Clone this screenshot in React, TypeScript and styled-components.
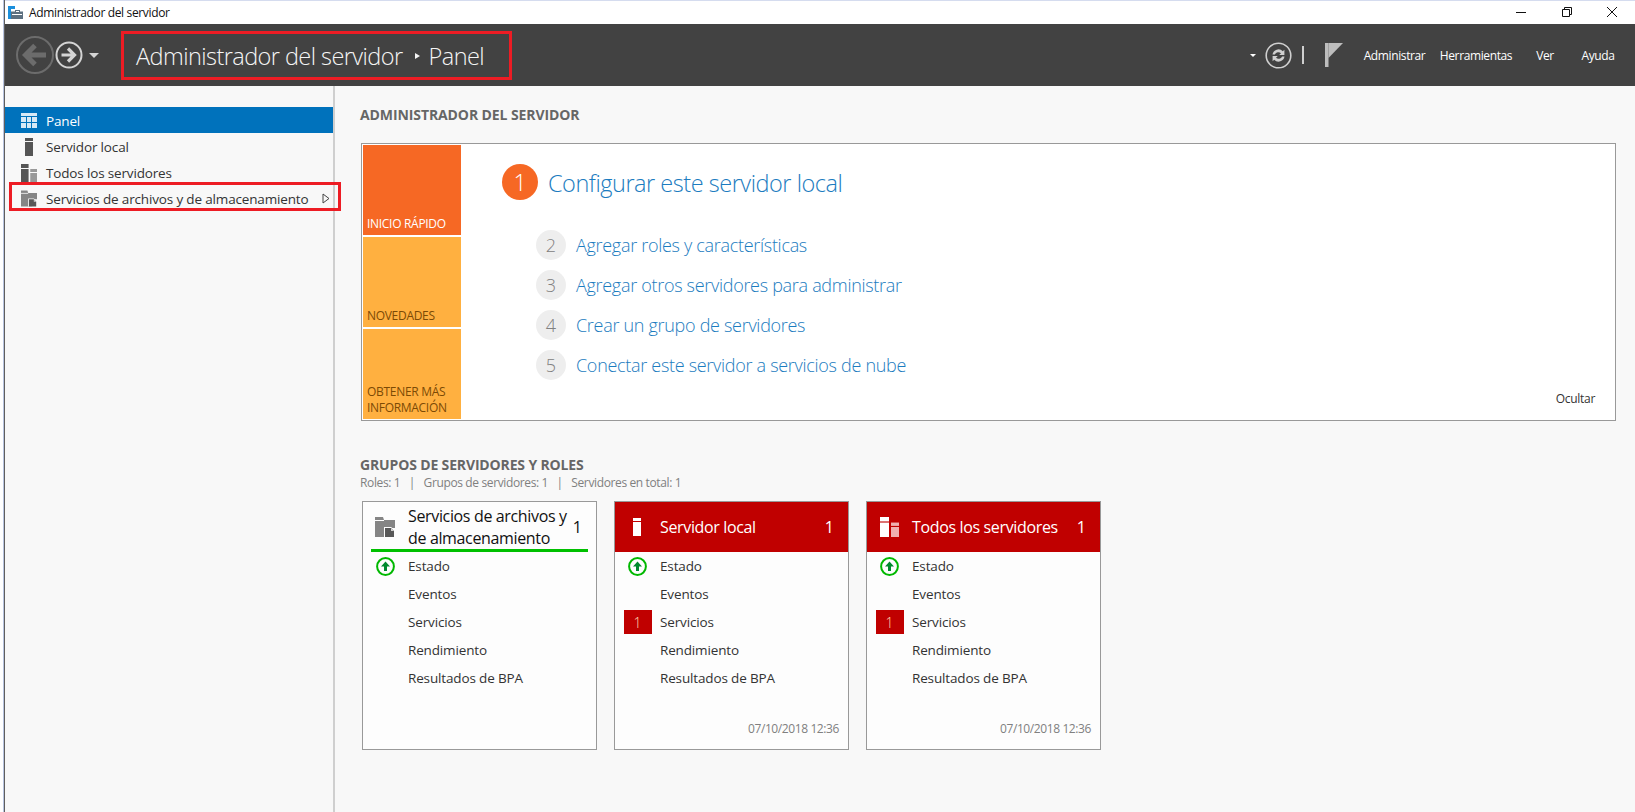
import React from 'react';
import styled, { createGlobalStyle } from 'styled-components';

const GlobalStyle = createGlobalStyle`
    html, body {
        margin: 0;
        padding: 0;
        background: #ffffff;
    }
    body {
        font-family: "Open Sans", "Noto Sans", "Liberation Sans", sans-serif;
        overflow: hidden;
    }
`;

const Outer = styled.div`
    width: 1635px;
    height: 812px;
    padding-left: 3px;
    box-sizing: border-box;
    background: #ffffff;
`;

const WindowFrame = styled.div`
    height: 100%;
    display: flex;
    flex-direction: column;
    border-left: 1px solid #b9c4df;
    box-sizing: border-box;
`;

const WindowInner = styled.div`
    flex: 1;
    min-height: 0;
    display: flex;
    flex-direction: column;
    border-left: 1px solid #5f5f5f;
`;

const TitleBar = styled.div`
    height: 24px;
    flex: none;
    display: flex;
    align-items: center;
    box-sizing: border-box;
    border-top: 1px solid #d5dcef;
    padding-left: 3px;
    background: #ffffff;
`;

const TitleText = styled.span`
    margin-left: 6px;
    font-size: 12px;
    letter-spacing: -0.35px;
    color: #111111;
`;

const WindowButtons = styled.div`
    margin-left: auto;
    display: flex;
    margin-top: -2px;
`;

const WindowButton = styled.div`
    width: 45.5px;
    display: flex;
    justify-content: center;
`;

const Header = styled.header`
    height: 62px;
    flex: none;
    display: flex;
    align-items: center;
    padding-left: 10px;
    padding-right: 10px;
    background: #424242;
`;

const NavIcons = styled.div`
    display: flex;
    align-items: center;
    width: 106px;
    flex: none;
`;

const CaretGap = styled.span<{ $width: number }>`
    width: ${p => p.$width}px;
`;

const Breadcrumb = styled.div`
    width: 391px;
    height: 49px;
    box-sizing: border-box;
    border: 3px solid #ed1c24;
    display: flex;
    align-items: center;
    padding: 1px 0 0 12px;
    color: #f5f5f5;
    font-size: 23.5px;
    font-weight: 300;
    letter-spacing: -0.56px;
`;

const CrumbCaret = styled.span`
    width: 0;
    height: 0;
    margin: 0 9px 0 12px;
    border-left: 5px solid #f5f5f5;
    border-top: 3.5px solid transparent;
    border-bottom: 3.5px solid transparent;
`;

const HeaderRight = styled.div`
    margin-left: auto;
    display: flex;
    align-items: center;
`;

const DownCaret = styled.span<{ $size: number; $color: string }>`
    width: 0;
    height: 0;
    border-top: ${p => p.$size}px solid ${p => p.$color};
    border-left: ${p => p.$size}px solid transparent;
    border-right: ${p => p.$size}px solid transparent;
`;

const Divider = styled.span`
    width: 2px;
    height: 18px;
    margin: 0 21px 0 10px;
    background: #cfcfcf;
`;

const FlagSlot = styled.div`
    width: 31px;
    display: flex;
`;

const MenuItem = styled.span<{ $width: number }>`
    width: ${p => p.$width}px;
    text-align: center;
    color: #ffffff;
    font-size: 12px;
    letter-spacing: -0.38px;
`;

const Body = styled.div`
    flex: 1;
    min-height: 0;
    display: flex;
    background: #f8f8f8;
`;

const Sidebar = styled.nav`
    width: 330px;
    flex: none;
    box-sizing: border-box;
    border-right: 2px solid #cfcfcf;
    padding-top: 21px;
`;

const SideRow = styled.div<{ $active?: boolean }>`
    position: relative;
    height: 26px;
    box-sizing: border-box;
    display: flex;
    align-items: center;
    padding: 1px 0 0 16px;
    font-size: 13.5px;
    letter-spacing: -0.16px;
    color: ${p => (p.$active ? '#ffffff' : '#333333')};
    background: ${p => (p.$active ? '#0072bc' : 'transparent')};
`;

const SideIcon = styled.span`
    width: 16px;
    height: 20px;
    margin-right: 9px;
    display: flex;
    align-items: center;
    justify-content: center;
`;

const SideArrow = styled.svg`
    position: absolute;
    left: 317px;
    top: 8px;
`;

const MarkBox = styled.div`
    position: absolute;
    left: 4px;
    top: -3px;
    width: 332px;
    height: 29px;
    box-sizing: border-box;
    border: 3px solid #ed1c24;
`;

const Main = styled.main`
    flex: 1;
    min-width: 0;
    padding: 20px 19px 0 25px;
`;

const SectionTitle = styled.h2`
    margin: 0;
    font-size: 14px;
    line-height: 18px;
    font-weight: 700;
    color: #666666;
    letter-spacing: -0.1px;
`;

const QuickBox = styled.section`
    margin: 19px 0 0 1px;
    height: 278px;
    box-sizing: border-box;
    border: 1px solid #999999;
    background: #ffffff;
    padding: 1px;
    display: flex;
`;

const TileColumn = styled.div`
    width: 98px;
    flex: none;
    display: flex;
    flex-direction: column;
    gap: 2px;
`;

const Tile = styled.div<{ $current?: boolean }>`
    height: 90px;
    box-sizing: border-box;
    display: flex;
    align-items: flex-end;
    padding: 0 4px 3px 4px;
    font-size: 12px;
    line-height: 16px;
    letter-spacing: -0.3px;
    background: ${p => (p.$current ? '#f66824' : '#ffb040')};
    color: ${p => (p.$current ? '#ffffff' : '#7c4a05')};
`;

const QuickContent = styled.div`
    flex: 1;
    min-width: 0;
    display: flex;
    flex-direction: column;
    padding: 19px 19px 18px 41px;
`;

const FirstStep = styled.div`
    display: flex;
    align-items: center;
    gap: 10px;
    margin-bottom: 30px;
`;

const FirstNumber = styled.span`
    width: 36px;
    height: 36px;
    border-radius: 50%;
    background: #f66824;
    color: #ffffff;
    font-size: 23px;
    font-weight: 300;
    display: flex;
    align-items: center;
    justify-content: center;
`;

const FirstLink = styled.span`
    font-size: 23.5px;
    font-weight: 300;
    letter-spacing: -0.47px;
    color: #1c7cc0;
    padding-top: 1px;
`;

const Step = styled.div`
    display: flex;
    align-items: center;
    gap: 10px;
    height: 30px;
    margin: 0 0 10px 34px;
`;

const StepNumber = styled.span`
    width: 30px;
    height: 30px;
    border-radius: 50%;
    background: #eeeeee;
    color: #808080;
    font-size: 18px;
    font-weight: 300;
    display: flex;
    align-items: center;
    justify-content: center;
`;

const StepLink = styled.span`
    font-size: 18px;
    font-weight: 300;
    letter-spacing: -0.3px;
    color: #1c7cc0;
`;

const HideLink = styled.span`
    margin-top: auto;
    align-self: flex-end;
    font-size: 12px;
    line-height: 18px;
    letter-spacing: -0.3px;
    color: #333333;
`;

const GroupsTitle = styled(SectionTitle)`
    margin-top: 35px;
    letter-spacing: -0.15px;
`;

const GroupsSummary = styled.div`
    margin-top: 1px;
    display: flex;
    gap: 8.5px;
    font-size: 12px;
    line-height: 16px;
    letter-spacing: -0.37px;
    color: #808080;
`;

const Cards = styled.div`
    margin: 10px 0 0 2px;
    display: flex;
    gap: 17px;
`;

const Card = styled.article`
    width: 235px;
    height: 249px;
    box-sizing: border-box;
    border: 1px solid #999999;
    background: #fdfdfd;
    display: flex;
    flex-direction: column;
`;

const CardHeader = styled.div<{ $alert?: boolean }>`
    height: 50px;
    flex: none;
    box-sizing: border-box;
    display: flex;
    align-items: center;
    padding: ${p => (p.$alert ? '0 14px 0 12px' : '3px 6px 0 4px')};
    margin: ${p => (p.$alert ? '0' : '0 8px')};
    background: ${p => (p.$alert ? '#c00000' : 'transparent')};
    border-bottom: ${p => (p.$alert ? 'none' : '3px solid #00c000')};
    color: ${p => (p.$alert ? '#ffffff' : '#111111')};
`;

const CardIcon = styled.span`
    width: 20px;
    flex: none;
    display: flex;
    justify-content: center;
`;

const CardTitle = styled.span`
    flex: 1;
    margin-left: 13px;
    font-size: 16px;
    line-height: 22px;
    letter-spacing: -0.35px;
`;

const CardCount = styled.span<{ $alert?: boolean }>`
    font-size: 16px;
    margin-left: 4px;
    margin-top: ${p => (p.$alert ? '0' : '-1px')};
`;

const CardRow = styled.div`
    height: 28px;
    display: flex;
    align-items: center;
    font-size: 13.5px;
    letter-spacing: -0.15px;
    color: #333333;
`;

const RowSlot = styled.span`
    width: 45px;
    flex: none;
    display: flex;
    justify-content: center;
`;

const RowBadge = styled.span`
    width: 28px;
    height: 24px;
    background: #c00000;
    color: #ffd9b0;
    font-size: 14px;
    font-weight: 300;
    display: flex;
    align-items: center;
    justify-content: center;
`;

const CardTime = styled.div`
    margin-top: auto;
    padding: 0 9px 12px 0;
    text-align: right;
    font-size: 12px;
    line-height: 16px;
    letter-spacing: -0.4px;
    color: #808080;
`;

const AppIcon = () => (
    <svg width="15" height="14" viewBox="0 0 15 14">
        <rect x="0" y="0" width="7" height="3" fill="#1b8fdc" />
        <rect x="0" y="3" width="3" height="10" fill="#1b8fdc" />
        <path d="M5 5.5h2V4h5v1.5h3V13H3V5.5z" fill="#5d7080" />
        <rect x="4" y="8" width="10" height="1" fill="#ffffff" />
        <rect x="8" y="5" width="3" height="1" fill="#ffffff" />
    </svg>
);

const BackIcon = () => (
    <svg width="40" height="40" viewBox="0 0 40 40">
        <circle cx="20" cy="20" r="18" fill="none" stroke="#6c6c6c" strokeWidth="2" />
        <path d="M31 20H11M20 10.5 10.5 20l9.5 9.5" fill="none" stroke="#6c6c6c" strokeWidth="5" />
    </svg>
);

const ForwardIcon = () => (
    <svg width="28" height="28" viewBox="0 0 28 28">
        <circle cx="14" cy="14" r="12.5" fill="none" stroke="#d4d4d4" strokeWidth="2" />
        <path d="M6.5 14h13M13 7.5l6.5 6.5-6.5 6.5" fill="none" stroke="#d4d4d4" strokeWidth="3.2" />
    </svg>
);

const RefreshIcon = () => (
    <svg width="27" height="27" viewBox="0 0 27 27">
        <circle cx="13.5" cy="13.5" r="12.3" fill="none" stroke="#cfcfcf" strokeWidth="1.6" />
        <path d="M7.5 12.5a6 6 0 0 1 10.3-3.2l1.6-1.5v5.3h-5.2l1.8-1.8a3.7 3.7 0 0 0-6.1 1.2z" fill="#cfcfcf" />
        <path d="M19.5 14.5a6 6 0 0 1-10.3 3.2l-1.6 1.5v-5.3h5.2L11 15.7a3.7 3.7 0 0 0 6.1-1.2z" fill="#cfcfcf" />
    </svg>
);

const FlagIcon = () => (
    <svg width="18" height="24" viewBox="0 0 18 24">
        <rect x="0" y="0" width="3.5" height="24" fill="#bdbdbd" />
        <path d="M3.5 0H18L3.5 15z" fill="#bdbdbd" />
    </svg>
);

const PanelIcon = () => (
    <svg width="16" height="15" viewBox="0 0 16 15">
        <rect x="0" y="0" width="16" height="3" fill="#d7e9f6" />
        <path d="M0 4h5v5H0zM6 4h4v5H6zM11 4h5v5h-5zM0 10h5v5H0zM6 10h4v5H6zM11 10h5v5h-5z" fill="#d7e9f6" />
    </svg>
);

const ServerIcon = ({ color = '#555555' }: { color?: string }) => (
    <svg width="8" height="18" viewBox="0 0 8 18">
        <rect x="0" y="0" width="8" height="3" fill={color} />
        <rect x="0" y="4" width="8" height="14" fill={color} />
    </svg>
);

const AllServersIcon = ({ color = '#555555', light = '#999999', width = 16, height = 18 }: { color?: string; light?: string; width?: number; height?: number }) => (
    <svg width={width} height={height} viewBox="0 0 19 18" preserveAspectRatio="none">
        <rect x="0" y="0" width="9" height="4" fill={color} />
        <rect x="0" y="5" width="9" height="13" fill={color} />
        <rect x="11" y="5" width="8" height="3" fill={light} />
        <rect x="11" y="9" width="8" height="9" fill={light} />
    </svg>
);

const FilesIcon = ({ size = 17, back = '#f8f8f8' }: { size?: number; back?: string }) => (
    <svg width={size} height={size} viewBox="0 0 20 20">
        <path d="M0 0h8l1 3h11v8h-6v9H0z" fill="#858585" />
        <rect x="0" y="3" width="9" height="1" fill={back} />
        <path d="M9 10h7l4 3v7H9z" fill={back} />
        <path d="M10 11h6l3 3v6h-9z" fill="#585858" />
        <path d="M16 11l3 3h-3z" fill="#d0d0d0" />
    </svg>
);

const StatusUpIcon = () => (
    <svg width="19" height="19" viewBox="0 0 19 19">
        <circle cx="9.5" cy="9.5" r="8.4" fill="none" stroke="#00b800" strokeWidth="2" />
        <path d="M9.5 4.5 14 9.5h-3v4.5H8V9.5H5z" fill="#008a2e" />
    </svg>
);

const Minimize = () => (
    <svg width="10" height="10" viewBox="0 0 10 10">
        <rect x="0" y="5" width="10" height="1" fill="#111111" />
    </svg>
);

const Restore = () => (
    <svg width="10" height="10" viewBox="0 0 10 10">
        <path d="M2.5 2.5V.5h7v7h-2M.5 2.5h7v7h-7z" fill="none" stroke="#111111" />
    </svg>
);

const Close = () => (
    <svg width="10" height="10" viewBox="0 0 10 10">
        <path d="M0 0l10 10M10 0 0 10" fill="none" stroke="#111111" />
    </svg>
);

interface ServerCard {
    title: string;
    icon: React.ReactNode;
    alert: boolean;
    time?: string;
}

const cards: ServerCard[] = [
    { title: 'Servicios de archivos y de almacenamiento', icon: <FilesIcon size={20} back="#fdfdfd" />, alert: false },
    { title: 'Servidor local', icon: <ServerIcon color="#ffffff" />, alert: true, time: '07/10/2018 12:36' },
    {
        title: 'Todos los servidores',
        icon: <AllServersIcon color="#ffffff" light="#f0b0b0" width={19} height={20} />,
        alert: true,
        time: '07/10/2018 12:36',
    },
];

const steps = [
    { n: 2, label: 'Agregar roles y características' },
    { n: 3, label: 'Agregar otros servidores para administrar' },
    { n: 4, label: 'Crear un grupo de servidores' },
    { n: 5, label: 'Conectar este servidor a servicios de nube' },
];

const App = () => {
    return (
        <Outer>
            <GlobalStyle />
            <WindowFrame>
                <WindowInner>
                    <TitleBar>
                        <AppIcon />
                        <TitleText>Administrador del servidor</TitleText>
                        <WindowButtons>
                            <WindowButton><Minimize /></WindowButton>
                            <WindowButton><Restore /></WindowButton>
                            <WindowButton><Close /></WindowButton>
                        </WindowButtons>
                    </TitleBar>
                    <Header>
                        <NavIcons>
                            <BackIcon />
                            <ForwardIcon />
                            <CaretGap $width={6} />
                            <DownCaret $size={5} $color="#d4d4d4" />
                        </NavIcons>
                        <Breadcrumb>
                            Administrador del servidor
                            <CrumbCaret />
                            Panel
                        </Breadcrumb>
                        <HeaderRight>
                            <DownCaret $size={3.5} $color="#ffffff" />
                            <CaretGap $width={9} />
                            <RefreshIcon />
                            <Divider />
                            <FlagSlot><FlagIcon /></FlagSlot>
                            <MenuItem $width={77}>Administrar</MenuItem>
                            <MenuItem $width={86}>Herramientas</MenuItem>
                            <MenuItem $width={52}>Ver</MenuItem>
                            <MenuItem $width={54}>Ayuda</MenuItem>
                        </HeaderRight>
                    </Header>
                    <Body>
                        <Sidebar>
                            <SideRow $active>
                                <SideIcon><PanelIcon /></SideIcon>
                                Panel
                            </SideRow>
                            <SideRow>
                                <SideIcon><ServerIcon /></SideIcon>
                                Servidor local
                            </SideRow>
                            <SideRow>
                                <SideIcon><AllServersIcon /></SideIcon>
                                Todos los servidores
                            </SideRow>
                            <SideRow>
                                <SideIcon><FilesIcon /></SideIcon>
                                Servicios de archivos y de almacenamiento
                                <SideArrow width="8" height="11" viewBox="0 0 8 11">
                                    <path d="M1 1l6 4.5L1 10z" fill="none" stroke="#444444" />
                                </SideArrow>
                                <MarkBox />
                            </SideRow>
                        </Sidebar>
                        <Main>
                            <SectionTitle>ADMINISTRADOR DEL SERVIDOR</SectionTitle>
                            <QuickBox>
                                <TileColumn>
                                    <Tile $current>INICIO RÁPIDO</Tile>
                                    <Tile>NOVEDADES</Tile>
                                    <Tile>OBTENER MÁS INFORMACIÓN</Tile>
                                </TileColumn>
                                <QuickContent>
                                    <FirstStep>
                                        <FirstNumber>1</FirstNumber>
                                        <FirstLink>Configurar este servidor local</FirstLink>
                                    </FirstStep>
                                    {steps.map(step => (
                                        <Step key={step.n}>
                                            <StepNumber>{step.n}</StepNumber>
                                            <StepLink>{step.label}</StepLink>
                                        </Step>
                                    ))}
                                    <HideLink>Ocultar</HideLink>
                                </QuickContent>
                            </QuickBox>
                            <GroupsTitle>GRUPOS DE SERVIDORES Y ROLES</GroupsTitle>
                            <GroupsSummary>
                                <span>Roles: 1</span>
                                <span>|</span>
                                <span>Grupos de servidores: 1</span>
                                <span>|</span>
                                <span>Servidores en total: 1</span>
                            </GroupsSummary>
                            <Cards>
                                {cards.map(card => (
                                    <Card key={card.title}>
                                        <CardHeader $alert={card.alert}>
                                            <CardIcon>{card.icon}</CardIcon>
                                            <CardTitle>{card.title}</CardTitle>
                                            <CardCount $alert={card.alert}>1</CardCount>
                                        </CardHeader>
                                        <CardRow>
                                            <RowSlot><StatusUpIcon /></RowSlot>
                                            Estado
                                        </CardRow>
                                        <CardRow>
                                            <RowSlot />
                                            Eventos
                                        </CardRow>
                                        <CardRow>
                                            <RowSlot>{card.alert && <RowBadge>1</RowBadge>}</RowSlot>
                                            Servicios
                                        </CardRow>
                                        <CardRow>
                                            <RowSlot />
                                            Rendimiento
                                        </CardRow>
                                        <CardRow>
                                            <RowSlot />
                                            Resultados de BPA
                                        </CardRow>
                                        {card.time && <CardTime>{card.time}</CardTime>}
                                    </Card>
                                ))}
                            </Cards>
                        </Main>
                    </Body>
                </WindowInner>
            </WindowFrame>
        </Outer>
    );
};

export default App;
